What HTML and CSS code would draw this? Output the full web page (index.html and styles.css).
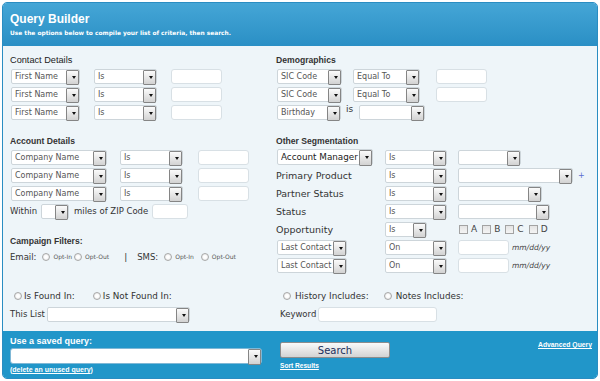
FILE: index.html
```html
<!DOCTYPE html>
<html lang="en">
<head>
    <meta charset="UTF-8">
    <title>Query Builder</title>
    <link rel="stylesheet" href="styles.css">
</head>
<body>
<div class="qb">
    <div class="qb-head">
        <h1>Query Builder</h1>
        <p>Use the options below to compile your list of criteria, then search.</p>
    </div>

    <div class="qb-body">
        <!-- contact details -->
        <div class="sec">
            <h2 class="plain">Contact Details</h2>
            <div class="row">
                <span class="dd c-field"><select><option>First Name</option></select></span>
                <span class="dd c-op"><select><option>Is</option></select></span>
                <input class="txt c-val" type="text">
            </div>
            <div class="row">
                <span class="dd c-field"><select><option>First Name</option></select></span>
                <span class="dd c-op"><select><option>Is</option></select></span>
                <input class="txt c-val" type="text">
            </div>
            <div class="row">
                <span class="dd c-field"><select><option>First Name</option></select></span>
                <span class="dd c-op"><select><option>Is</option></select></span>
                <input class="txt c-val" type="text">
            </div>
        </div>

        <!-- demographics -->
        <div class="sec">
            <h2>Demographics</h2>
            <div class="row">
                <span class="dd d-field"><select><option>SIC Code</option></select></span>
                <span class="dd d-op"><select><option>Equal To</option></select></span>
                <input class="txt d-val" type="text">
            </div>
            <div class="row">
                <span class="dd d-field"><select><option>SIC Code</option></select></span>
                <span class="dd d-op"><select><option>Equal To</option></select></span>
                <input class="txt d-val" type="text">
            </div>
            <div class="row">
                <span class="dd d-bday"><select><option>Birthday</option></select></span>
                <span class="is">is</span>
                <span class="dd d-date"><select><option></option></select></span>
            </div>
        </div>

        <!-- account details + campaign -->
        <div class="sec">
            <h2>Account Details</h2>
            <div class="row">
                <span class="dd a-field"><select><option>Company Name</option></select></span>
                <span class="dd a-op"><select><option>Is</option></select></span>
                <input class="txt a-val" type="text">
            </div>
            <div class="row">
                <span class="dd a-field"><select><option>Company Name</option></select></span>
                <span class="dd a-op"><select><option>Is</option></select></span>
                <input class="txt a-val" type="text">
            </div>
            <div class="row">
                <span class="dd a-field"><select><option>Company Name</option></select></span>
                <span class="dd a-op"><select><option>Is</option></select></span>
                <input class="txt a-val" type="text">
            </div>
            <div class="row">
                <span class="lbl sm">Within</span>
                <span class="dd a-miles"><select><option></option></select></span>
                <span class="lbl sm a-zip-lbl">miles of ZIP Code</span>
                <input class="txt a-zip" type="text">
            </div>

            <h2 class="camp">Campaign Filters:</h2>
            <div class="row camp-row">
                <span class="lbl sm">Email:</span>
                <label class="opt"><input type="radio" name="em">Opt-In</label>
                <label class="opt"><input type="radio" name="em">Opt-Out</label>
                <span class="pipe">|</span>
                <span class="lbl sm">SMS:</span>
                <label class="opt"><input type="radio" name="sms">Opt-In</label>
                <label class="opt"><input type="radio" name="sms">Opt-Out</label>
            </div>
        </div>

        <!-- other segmentation -->
        <div class="sec">
            <h2>Other Segmentation</h2>
            <div class="row">
                <span class="o-lbl"><span class="dd o-mgr"><select><option>Account Manager</option></select></span></span>
                <span class="dd o-op"><select><option>Is</option></select></span>
                <span class="dd o-v1"><select><option></option></select></span>
            </div>
            <div class="row">
                <span class="o-lbl lbl">Primary Product</span>
                <span class="dd o-op"><select><option>Is</option></select></span>
                <span class="dd o-v2"><select><option></option></select></span>
                <span class="plus">+</span>
            </div>
            <div class="row">
                <span class="o-lbl lbl">Partner Status</span>
                <span class="dd o-op"><select><option>Is</option></select></span>
                <span class="dd o-v3"><select><option></option></select></span>
            </div>
            <div class="row">
                <span class="o-lbl lbl">Status</span>
                <span class="dd o-op"><select><option>Is</option></select></span>
                <span class="dd o-v4"><select><option></option></select></span>
            </div>
            <div class="row">
                <span class="o-lbl lbl">Opportunity</span>
                <span class="dd o-op-sm"><select><option>Is</option></select></span>
                <label class="chk"><input type="checkbox">A</label>
                <label class="chk"><input type="checkbox">B</label>
                <label class="chk"><input type="checkbox">C</label>
                <label class="chk"><input type="checkbox">D</label>
            </div>
            <div class="row">
                <span class="o-lbl"><span class="dd o-last"><select><option>Last Contact</option></select></span></span>
                <span class="dd o-op"><select><option>On</option></select></span>
                <input class="txt o-date" type="text">
                <span class="fmt">mm/dd/yy</span>
            </div>
            <div class="row">
                <span class="o-lbl"><span class="dd o-last"><select><option>Last Contact</option></select></span></span>
                <span class="dd o-op"><select><option>On</option></select></span>
                <input class="txt o-date" type="text">
                <span class="fmt">mm/dd/yy</span>
            </div>
        </div>

        <!-- list filter -->
        <div class="sec">
            <div class="row">
                <label class="rad found"><input type="radio" name="lst">Is Found In:</label>
                <label class="rad notfound"><input type="radio" name="lst">Is Not Found In:</label>
            </div>
            <div class="row">
                <span class="lbl sm">This List</span>
                <span class="dd l-list"><select><option></option></select></span>
            </div>
        </div>

        <!-- keyword filter -->
        <div class="sec">
            <div class="row">
                <label class="rad hist"><input type="radio" name="kw">History Includes:</label>
                <label class="rad notes"><input type="radio" name="kw">Notes Includes:</label>
            </div>
            <div class="row kw-row">
                <span class="lbl sm">Keyword</span>
                <input class="txt k-val" type="text">
            </div>
        </div>
    </div>

    <div class="qb-foot">
        <div class="saved">
            <div class="saved-lbl">Use a saved query:</div>
            <span class="dd f-saved"><select><option></option></select></span>
            <div class="f-link">(<a href="#">delete an unused query</a>)</div>
        </div>
        <div class="go">
            <button type="button">Search</button>
            <a class="f-link" href="#">Sort Results</a>
        </div>
        <a class="f-link adv" href="#">Advanced Query</a>
    </div>
</div>
</body>
</html>
```

FILE: styles.css
```css
* { box-sizing: border-box; }
body { margin: 2px; font-family: "DejaVu Sans", "Liberation Sans", sans-serif; font-size: 9px; color: #333; background: #fff; }

.qb { width: 596px; height: 377px; border: 1px solid #2a8dc2; border-radius: 5px; overflow: hidden; background: #eef5f9; display: flex; flex-direction: column; }

.qb-head { height: 43px; padding: 8px 7px 0; background: linear-gradient(#45a6d6, #2a8fc5); color: #fff; }
.qb-head h1 { margin: 0; font-family: "Liberation Sans", sans-serif; font-size: 12px; line-height: 17px; font-weight: bold; }
.qb-head p { margin: 0; font-size: 5.9px; line-height: 10px; font-weight: bold; }

.qb-body { flex: 1; display: grid; grid-template-columns: 266px 1fr; grid-template-rows: auto auto auto; row-gap: 13px; padding: 7px 7px 0; align-content: start; }

h2 { margin: 0; font-family: "Liberation Sans", sans-serif; font-size: 8.6px; line-height: 14px; font-weight: bold; color: #333; }
h2.plain { font-weight: normal; font-size: 9.2px; color: #222; }
h2.camp { margin-top: 14px; }

.row { display: flex; align-items: center; height: 18px; }
.lbl { color: #333; font-size: 9.5px; white-space: nowrap; }
.lbl.sm { font-size: 8.5px; }

/* dropdown */
.dd { position: relative; display: inline-block; height: 15px; background: #fff; border: 1px solid #cdd5da; border-radius: 2px; flex: none; }
.dd select { appearance: none; -webkit-appearance: none; display: block; width: 100%; height: 100%; border: 0; outline: 0; background: transparent; padding: 0 14px 0 3px; font: inherit; font-size: 8px; color: #555; }
.dd::after { content: ""; position: absolute; right: 0; top: 0; width: 11px; height: 13px; border: 1px solid #858585; border-radius: 1px; background: linear-gradient(#fbfbfb, #d2d2d2); pointer-events: none; }
.dd::before { content: ""; position: absolute; right: 3px; top: 6px; width: 0; height: 0; border-left: 2.5px solid transparent; border-right: 2.5px solid transparent; border-top: 3px solid #111; z-index: 1; pointer-events: none; }

.txt { height: 15px; border: 1px solid #d8e0e5; border-radius: 3px; background: #fff; padding: 0 3px; font: inherit; flex: none; }

/* contact */
.c-field { width: 69px; margin-left: 1px; }
.c-op { width: 63px; margin-left: 14px; }
.c-val { width: 51px; margin-left: 14px; }

/* demographics */
.d-field { width: 65px; margin-left: 1px; }
.d-op { width: 67px; margin-left: 11px; }
.d-val { width: 51px; margin-left: 16px; }
.d-bday { width: 64px; margin-left: 1px; }
.is { margin-left: 5px; font-size: 9px; align-self: flex-start; margin-top: 1px; }
.d-date { width: 66px; margin-left: 6px; }

/* account */
.a-field { width: 96px; margin-left: 1px; }
.a-op { width: 63px; margin-left: 13px; }
.a-val { width: 51px; margin-left: 15px; }
.a-miles { width: 28px; margin-left: 4px; }
.a-zip-lbl { margin-left: 5px; }
.a-zip { width: 36px; margin-left: 4px; }

/* campaign */
.camp-row { height: 17px; }
.opt { display: flex; align-items: center; font-size: 6px; color: #555; margin-left: 2px; }
.opt input { margin-right: 2px; }
.camp-row .lbl + .opt { margin-left: 6px; }
.pipe { margin: 0 10px 0 15px; font-size: 9px; }
.pipe + .lbl + .opt + .opt { margin-left: 7px; }
input[type=radio] { appearance: none; -webkit-appearance: none; width: 8px; height: 8px; margin: 0 3px 0 0; border: 1px solid #a8a8a8; border-radius: 50%; background: radial-gradient(#fff 30%, #dcdcdc); }

/* other segmentation */
.o-lbl { width: 109px; flex: none; display: flex; }
.o-mgr { width: 96px; height: 16px; margin-left: 1px; }
.o-mgr select { font-size: 8.8px; color: #222; padding-right: 11px; }
.o-mgr::after { height: 14px; }
.o-mgr::before { top: 6px; }
.o-op { width: 62px; }
.o-op-sm { width: 42px; }
.o-v1 { width: 63px; margin-left: 11px; }
.o-v2 { width: 115px; margin-left: 11px; }
.o-v3 { width: 84px; margin-left: 11px; }
.o-v4 { width: 92px; margin-left: 11px; }
.plus { margin-left: 5px; color: #5a6fd0; font-size: 8px; }
.chk { display: flex; align-items: center; font-size: 9px; color: #444; margin-right: 5px; }
.chk input { margin-right: 4px; }
.o-op-sm + .chk { margin-left: 32px; }
input[type=checkbox] { appearance: none; -webkit-appearance: none; width: 9px; height: 9px; margin: 0 3px 0 0; border: 1px solid #a3a3a3; background: linear-gradient(#e4e4e4, #f4f4f4); }
.o-last { width: 70px; margin-left: 1px; }
.o-date { width: 51px; margin-left: 11px; }
.fmt { margin-left: 3px; font-size: 7.5px; font-style: italic; color: #444; }

/* list + keyword */
.rad { display: flex; align-items: center; font-size: 8.8px; color: #333; }
.rad input { margin-right: 2px; }
.found { margin-left: 4px; }
.notfound { margin-left: 18px; }
.l-list { width: 143px; margin-left: 2px; }
.hist { margin-left: 7px; }
.hist input, .notes input { margin-right: 4px; }
.notes { margin-left: 15px; }
.kw-row { padding-left: 4px; }
.k-val { width: 119px; margin-left: 2px; }

/* footer */
.qb-foot { height: 47px; background: #2196c9; display: flex; align-items: flex-start; padding: 5px 5px 0 7px; color: #fff; font-family: "Liberation Sans", sans-serif; }
.saved { width: 252px; }
.saved-lbl { font-size: 9px; font-weight: bold; line-height: 11px; }
.f-saved { width: 252px; height: 16px; margin-top: 1px; border-color: #7fb8d6; border-radius: 3px; }
.f-saved::after { height: 14px; }
.f-link { display: block; font-size: 7px; font-weight: bold; line-height: 9px; color: #fff; margin-top: 1px; }
.f-link a, a.f-link { color: #fff; text-decoration: underline; }
.go { margin-left: 18px; width: 110px; }
.go button { display: block; width: 110px; height: 16px; margin-top: 6px; padding: 0; border: 1px solid #8c8c8c; border-radius: 2px; background: linear-gradient(#fafafa, #d3d3d3); font-family: "DejaVu Sans", sans-serif; font-size: 10px; color: #1c2f5c; }
.go .f-link { margin-top: 3px; font-size: 6.6px; }
.adv { margin-left: auto; margin-top: 4px; font-size: 6.8px; }
```
